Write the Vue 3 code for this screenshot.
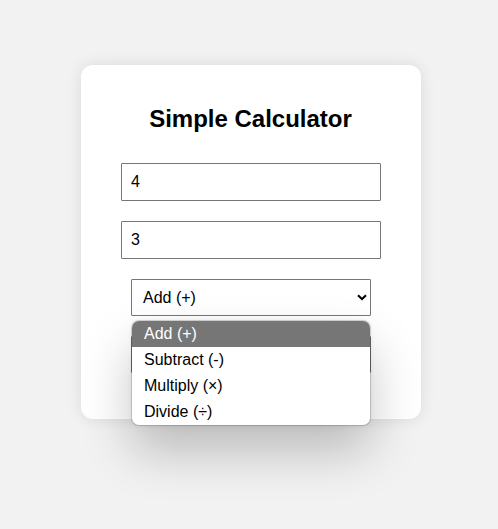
<script setup>
import { ref } from 'vue'

const first = ref('4')
const second = ref('3')
const operations = ['Add (+)', 'Subtract (-)', 'Multiply (×)', 'Divide (÷)']
const selected = ref(0)
</script>

<template>
  <main class="page">
    <section class="card">
      <h2>Simple Calculator</h2>
      <input v-model="first" class="number" type="text" />
      <input v-model="second" class="number" type="text" />
      <div class="picker">
        <div class="select">
          <span>{{ operations[selected] }}</span>
          <svg class="chevron" width="10" height="7" viewBox="0 0 10 7">
            <path d="M1 1.2 L5 5 L9 1.2" fill="none" stroke="#000" stroke-width="2" />
          </svg>
        </div>
        <ul class="menu">
          <li
            v-for="(name, i) in operations"
            :key="name"
            :class="{ active: i === selected }"
            @click="selected = i"
          >{{ name }}</li>
        </ul>
      </div>
      <div class="action"></div>
    </section>
  </main>
</template>

<style>
body {
  margin: 0;
  background: #f2f2f2;
}
</style>

<style scoped>
.page {
  box-sizing: border-box;
  height: 529px;
  padding: 65px 0 0 81px;
  overflow: hidden;
  font-family: "Liberation Sans", Arial, sans-serif;
  font-size: 16px;
  color: #000;
}
.card {
  box-sizing: border-box;
  display: flex;
  flex-direction: column;
  align-items: center;
  width: 340px;
  height: 354px;
  padding: 40px 40px 0;
  border-radius: 12px;
  background: #fff;
  box-shadow: 0 0 15px rgba(0, 0, 0, 0.1);
}
h2 {
  margin: 0 0 30px;
  padding-right: 1px;
  font-size: 24px;
  line-height: 28px;
}
.number {
  box-sizing: border-box;
  width: 260px;
  height: 38px;
  margin: 0 0 20px;
  padding: 0 9px;
  border: 1px solid #767676;
  border-radius: 1px;
  outline: none;
  background: #fff;
  font: inherit;
  color: inherit;
}
.picker {
  position: relative;
  width: 240px;
}
.select {
  box-sizing: border-box;
  display: flex;
  align-items: center;
  justify-content: space-between;
  height: 37px;
  padding: 0 3px 0 11px;
  border: 1px solid #767676;
  border-radius: 1px;
}
.action {
  box-sizing: border-box;
  width: 240px;
  height: 37px;
  margin-top: 20px;
  border: 1px solid #767676;
  border-radius: 1px;
  background: #fff;
}
.menu {
  position: absolute;
  z-index: 1;
  top: 42px;
  left: 1px;
  width: 238px;
  margin: 0;
  padding: 0;
  overflow: hidden;
  list-style: none;
  border-radius: 7px;
  background: #fff;
  box-shadow:
    0 0 0 1px rgba(0, 0, 0, 0.14),
    0 0 4px rgba(0, 0, 0, 0.1),
    0 26px 50px rgba(0, 0, 0, 0.23);
}
.menu li {
  height: 26px;
  padding-left: 12px;
  line-height: 26px;
}
.menu .active {
  background: #767676;
  color: #fff;
}
</style>
